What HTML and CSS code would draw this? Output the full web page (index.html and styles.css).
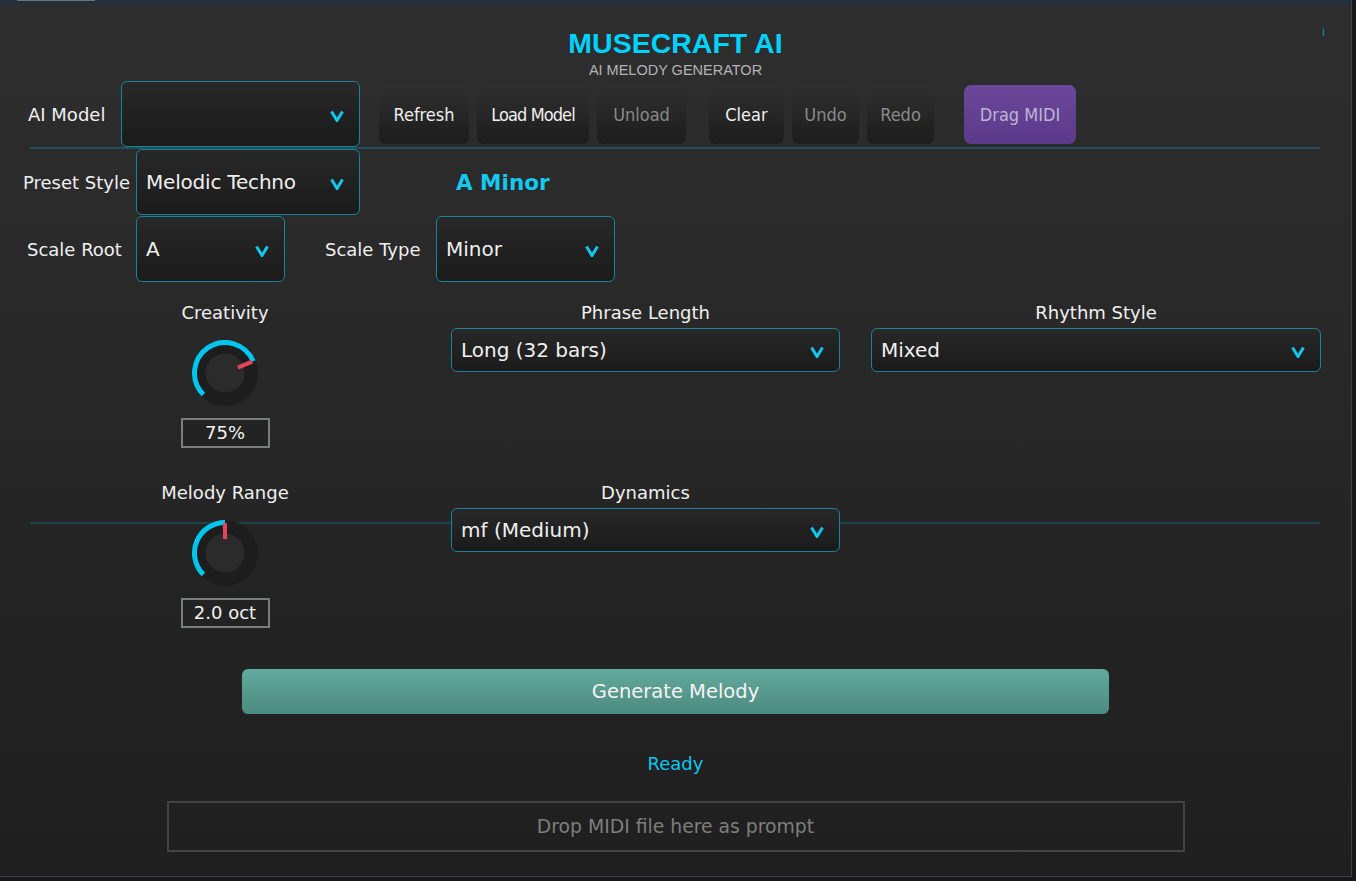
FILE: index.html
```html
<!DOCTYPE html>
<html>
<head>
<meta charset="utf-8">
<title>MuseCraft AI</title>
<link rel="stylesheet" href="styles.css">
</head>
<body>
<div class="app">
  <div class="strip"><div class="strip-tab"></div></div>

  <header class="header">
    <div class="title">MUSECRAFT AI</div>
    <div class="subtitle">AI MELODY GENERATOR</div>
    <span class="info">i</span>
  </header>

  <div class="row row-model">
    <span class="label lbl-model">AI Model</span>
    <div class="combo combo-model">
      <span class="combo-text"></span>
      <svg class="chev" width="14" height="12" viewBox="0 0 14 12"><path d="M1.5 1.5 L7 10.5 L12.5 1.5" fill="none" stroke="#14c6ee" stroke-width="3"/></svg>
    </div>
    <div class="btns">
      <div class="btn b-refresh">Refresh</div>
      <div class="btn b-load tight">Load Model</div>
      <div class="btn b-unload off">Unload</div>
      <div class="btn b-clear">Clear</div>
      <div class="btn b-undo off">Undo</div>
      <div class="btn b-redo off">Redo</div>
      <div class="btn b-drag">Drag MIDI</div>
    </div>
  </div>

  <div class="divider"></div>

  <div class="row row-preset">
    <span class="label lbl-preset">Preset Style</span>
    <div class="combo combo-preset">
      <span class="combo-text squeeze">Melodic Techno</span>
      <svg class="chev" width="14" height="12" viewBox="0 0 14 12"><path d="M1.5 1.5 L7 10.5 L12.5 1.5" fill="none" stroke="#14c6ee" stroke-width="3"/></svg>
    </div>
    <span class="key">A Minor</span>
  </div>

  <div class="row row-scale">
    <span class="label lbl-root">Scale Root</span>
    <div class="combo combo-root">
      <span class="combo-text">A</span>
      <svg class="chev" width="14" height="12" viewBox="0 0 14 12"><path d="M1.5 1.5 L7 10.5 L12.5 1.5" fill="none" stroke="#14c6ee" stroke-width="3"/></svg>
    </div>
    <span class="label lbl-type">Scale Type</span>
    <div class="combo combo-type">
      <span class="combo-text">Minor</span>
      <svg class="chev" width="14" height="12" viewBox="0 0 14 12"><path d="M1.5 1.5 L7 10.5 L12.5 1.5" fill="none" stroke="#14c6ee" stroke-width="3"/></svg>
    </div>
  </div>

  <section class="params">
    <div class="prow">
      <div class="kcell">
        <div class="plabel">Creativity</div>
        <svg class="knob" width="66" height="66" viewBox="0 0 66 66">
          <circle cx="33" cy="33" r="33" fill="#1d1d1d"/>
          <circle cx="33" cy="33" r="19.5" fill="#2b2b2b"/>
          <path d="M11.43 54.57 A30.5 30.5 0 1 1 61.18 21.33" fill="none" stroke="#00c6ee" stroke-width="5"/>
          <line x1="45.9" y1="27.6" x2="60.2" y2="21.7" stroke="#e4445f" stroke-width="4"/>
        </svg>
        <div class="valbox">75%</div>
      </div>
      <div class="ccell c-phrase">
        <div class="plabel">Phrase Length</div>
        <div class="combo combo-param">
          <span class="combo-text">Long (32 bars)</span>
          <svg class="chev" width="14" height="12" viewBox="0 0 14 12"><path d="M1.5 1.5 L7 10.5 L12.5 1.5" fill="none" stroke="#14c6ee" stroke-width="3"/></svg>
        </div>
      </div>
      <div class="ccell c-rhythm">
        <div class="plabel">Rhythm Style</div>
        <div class="combo combo-param">
          <span class="combo-text">Mixed</span>
          <svg class="chev" width="14" height="12" viewBox="0 0 14 12"><path d="M1.5 1.5 L7 10.5 L12.5 1.5" fill="none" stroke="#14c6ee" stroke-width="3"/></svg>
        </div>
      </div>
    </div>

    <div class="prow">
      <div class="kcell">
        <div class="plabel">Melody Range</div>
        <svg class="knob" width="66" height="66" viewBox="0 0 66 66">
          <circle cx="33" cy="33" r="33" fill="#1d1d1d"/>
          <circle cx="33" cy="33" r="19.5" fill="#2b2b2b"/>
          <path d="M11.43 54.57 A30.5 30.5 0 0 1 33 2.5" fill="none" stroke="#00c6ee" stroke-width="5"/>
          <line x1="33" y1="19" x2="33" y2="3" stroke="#e4445f" stroke-width="4"/>
        </svg>
        <div class="valbox">2.0 oct</div>
      </div>
      <div class="ccell c-phrase">
        <div class="plabel">Dynamics</div>
        <div class="combo combo-param">
          <span class="combo-text">mf (Medium)</span>
          <svg class="chev" width="14" height="12" viewBox="0 0 14 12"><path d="M1.5 1.5 L7 10.5 L12.5 1.5" fill="none" stroke="#14c6ee" stroke-width="3"/></svg>
        </div>
      </div>
    </div>
  </section>

  <div class="generate">Generate Melody</div>
  <div class="status">Ready</div>
  <div class="dropzone">Drop MIDI file here as prompt</div>
</div>
</body>
</html>
```

FILE: styles.css
```css
* { box-sizing: border-box; margin: 0; padding: 0; }

html, body {
  width: 1356px;
  height: 881px;
  overflow: hidden;
}

body {
  background: #18171a;
  font-family: "DejaVu Sans", sans-serif;
  color: #ececec;
}

.app {
  width: 1352px;
  height: 877px;
  border-right: 1px solid #3b4146;
  border-bottom: 1px solid #36444e;
  background: linear-gradient(#2e2e2e, #1f1f1f);
}

.strip {
  height: 5px;
  background: #243039;
}

.strip-tab {
  margin-left: 17px;
  width: 78px;
  height: 1px;
  background: #6e7478;
}

/* header */
.header {
  position: relative;
  padding-top: 22.5px;
  text-align: center;
}

.title {
  font: bold 28.5px/30px "Liberation Sans", Arial, sans-serif;
  color: #00d2ff;
}

.subtitle {
  margin-top: 4px;
  font: 14.5px/16px "Liberation Sans", Arial, sans-serif;
  color: #b4b4b4;
}

.info {
  position: absolute;
  top: 22px;
  left: 1322px;
  font: 11px/11px "DejaVu Sans", sans-serif;
  color: #1c90ad;
}

/* rows */
.row {
  display: flex;
  align-items: center;
  height: 66px;
}

.row-model { margin-top: 3.5px; padding-left: 28px; }
.row-preset { padding-left: 23px; }
.row-scale { margin-top: 1px; padding-left: 27px; }

.label {
  font-size: 18px;
  color: #f0f0f0;
  white-space: nowrap;
  flex: none;
}

.lbl-model { width: 93px; }
.lbl-preset { width: 113px; }
.lbl-root { width: 109px; }
.lbl-type { width: 111px; margin-left: 40px; }

.combo {
  flex: none;
  display: flex;
  align-items: center;
  justify-content: space-between;
  padding: 0 15px 0 9px;
  border: 1px solid #1b8396;
  border-radius: 6px;
  background: linear-gradient(#282828, #1b1b1b);
}

.combo-model { width: 239px; height: 66px; }
.combo-preset { width: 224px; height: 66px; }
.combo-root { width: 149px; height: 66px; }
.combo-type { width: 179px; height: 66px; }
.combo-param { width: 100%; height: 44px; margin-top: 4px; }

.combo-text {
  font-size: 20px;
  color: #f0f0f0;
  white-space: nowrap;
}

.combo-text.squeeze { letter-spacing: -0.2px; }

.chev {
  flex: none;
  margin-top: 4px;
}

.key {
  margin-left: 96px;
  font-weight: bold;
  font-size: 21.5px;
  color: #14c8f0;
}

/* buttons */
.btns {
  display: flex;
  align-items: center;
  margin-left: 19px;
}

.btn {
  height: 59px;
  display: flex;
  align-items: center;
  justify-content: center;
  border-radius: 7px;
  background: linear-gradient(#2f2f2f, #1d1d1d);
  font-family: "DejaVu Sans Condensed", "DejaVu Sans", sans-serif;
  font-stretch: condensed;
  font-size: 18px;
  color: #f0f0f0;
  white-space: nowrap;
}

.btn.off { color: #8a8a8a; }
.btn.tight { letter-spacing: -0.9px; }

.b-refresh { width: 90px; }
.b-load { width: 112px; margin-left: 8px; }
.b-unload { width: 89px; margin-left: 8px; }
.b-clear { width: 75px; margin-left: 23px; }
.b-undo { width: 67px; margin-left: 8px; }
.b-redo { width: 67px; margin-left: 8px; }
.b-drag {
  width: 112px;
  margin-left: 30px;
  background: linear-gradient(#6b479a, #5c3a8a);
  color: #bfb5d2;
}

.divider {
  margin-left: 30px;
  width: 1290px;
  height: 2px;
  background: #1f505c;
}

/* parameter section */
.params {
  margin-top: 20px;
  background: linear-gradient(#1c434c, #1c434c) no-repeat 30px 219.5px / 1290px 2px;
}

.prow {
  display: flex;
  padding-left: 150px;
}

.prow + .prow { margin-top: 34px; }

.kcell {
  width: 150px;
  flex: none;
  display: flex;
  flex-direction: column;
  align-items: center;
}

.plabel {
  height: 22px;
  font-size: 18px;
  line-height: 22px;
  color: #f0f0f0;
  white-space: nowrap;
}

.knob {
  display: block;
  margin-top: 16px;
}

.valbox {
  margin-top: 12px;
  width: 89px;
  height: 30px;
  border: 2px solid #787d7d;
  background: #232323;
  font-size: 18px;
  line-height: 26px;
  text-align: center;
  color: #f2f2f2;
}

.ccell {
  flex: none;
  display: flex;
  flex-direction: column;
  align-items: center;
}

.c-phrase { width: 389px; margin-left: 151px; }
.c-rhythm { width: 450px; margin-left: 31px; }

/* bottom */
.generate {
  margin: 41px auto 0;
  width: 867px;
  height: 45px;
  border-radius: 6px;
  background: linear-gradient(#64aa9e, #4c8a7e);
  font-size: 19.5px;
  line-height: 45px;
  text-align: center;
  color: #f4f4f4;
}

.status {
  margin-top: 39px;
  font-size: 18px;
  line-height: 22px;
  text-align: center;
  color: #0fc6f0;
}

.dropzone {
  margin: 26px auto 0;
  width: 1018px;
  height: 51px;
  border: 2px solid #434343;
  display: flex;
  align-items: center;
  justify-content: center;
  font-size: 18.8px;
  color: #7e7e7e;
}
```
